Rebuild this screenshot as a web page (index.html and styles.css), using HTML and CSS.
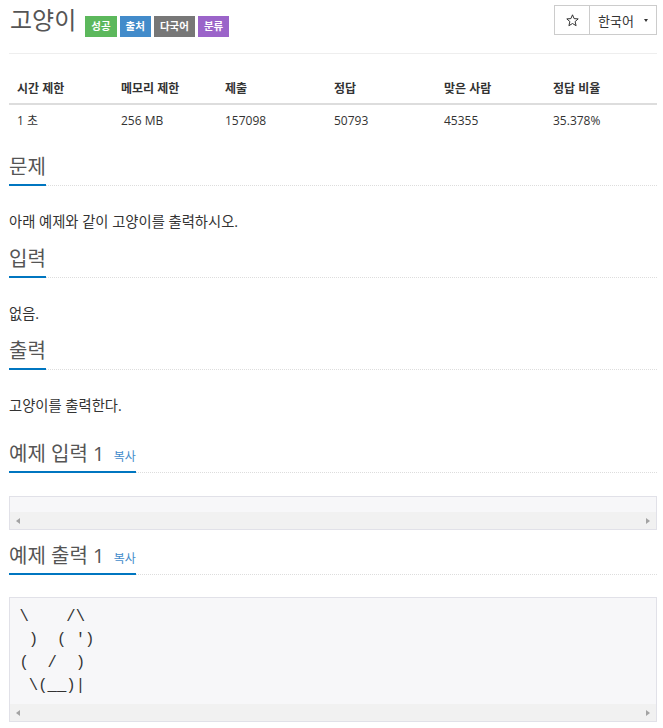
FILE: index.html
```html
<!DOCTYPE html>
<html lang="ko">
<head>
<meta charset="utf-8">
<title>고양이</title>
<link rel="stylesheet" href="styles.css">
</head>
<body>
<div class="page">
  <div class="top">
    <div class="title-row">
      <h1 class="title">고양이</h1>
      <span class="label label-success">성공</span>
      <span class="label label-primary">출처</span>
      <span class="label label-default">다국어</span>
      <span class="label label-purple">분류</span>
    </div>
    <div class="btn-group">
      <button class="btn btn-star" type="button"><svg class="star" width="13" height="13" viewBox="0 0 13 13"><polygon points="6.5,0.8 8.1,4.6 12.2,4.9 9.1,7.6 10.1,11.7 6.5,9.5 2.9,11.7 3.9,7.6 0.8,4.9 4.9,4.6" fill="none" stroke="#333" stroke-width="1" stroke-linejoin="miter"/></svg></button>
      <button class="btn btn-lang" type="button">한국어<span class="caret"></span></button>
    </div>
  </div>

  <table class="stats">
    <colgroup>
      <col class="c1"><col class="c2"><col class="c3"><col class="c4"><col class="c5"><col class="c6">
    </colgroup>
    <thead>
      <tr><th>시간 제한</th><th>메모리 제한</th><th>제출</th><th>정답</th><th>맞은 사람</th><th>정답 비율</th></tr>
    </thead>
    <tbody>
      <tr><td>1 초 </td><td>256 MB</td><td>157098</td><td>50793</td><td>45355</td><td>35.378%</td></tr>
    </tbody>
  </table>

  <section class="sec sec-first">
    <div class="headline"><h2>문제</h2></div>
    <p class="text">아래 예제와 같이 고양이를 출력하시오.</p>
  </section>

  <section class="sec">
    <div class="headline"><h2>입력</h2></div>
    <p class="text">없음.</p>
  </section>

  <section class="sec">
    <div class="headline"><h2>출력</h2></div>
    <p class="text">고양이를 출력한다.</p>
  </section>

  <section class="sec sample sample-in">
    <div class="headline"><h2>예제 입력 1 <a class="copy">복사</a></h2></div>
    <div class="pre">
      <div class="pre-body pre-empty"></div>
      <div class="hscroll"><span class="arr arr-l"></span><span class="arr arr-r"></span></div>
    </div>
  </section>

  <section class="sec sample sample-out">
    <div class="headline"><h2>예제 출력 1 <a class="copy">복사</a></h2></div>
    <div class="pre">
<pre class="pre-body code">\    /\
 )  ( ')
(  /  )
 \(__)|</pre>
      <div class="hscroll"><span class="arr arr-l"></span><span class="arr arr-r"></span></div>
    </div>
  </section>
</div>
</body>
</html>
```

FILE: styles.css
```css
* { box-sizing: border-box; }

body {
  margin: 0;
  background: #fff;
  color: #333;
  font-family: "Open Sans", "Noto Sans CJK KR", sans-serif;
  font-feature-settings: "palt";
  font-size: 14.3px;
}

.page {
  padding: 5px 6px 0 9px;
}

/* header */
.top {
  display: flex;
  justify-content: space-between;
  align-items: flex-start;
  height: 49px;
  border-bottom: 1px solid #eee;
}

.title-row {
  display: flex;
  align-items: flex-start;
  gap: 3px;
}

.title {
  margin: 1px 6px 0 1px;
  font-size: 24px;
  line-height: 28px;
  font-weight: 400;
  color: #555;
}

.label {
  margin-top: 11px;
  height: 21px;
  line-height: 21px;
  padding: 0 6px;
  font-size: 10.5px;
  font-weight: 700;
  color: #fff;
}

.label-success { background: #5cb85c; }
.label-primary { background: #428bca; }
.label-default { background: #777; }
.label-purple { background: #9b64c9; }

.btn-group {
  display: flex;
}

.btn {
  height: 30px;
  border: 1px solid #ccc;
  background: #fff;
  color: #333;
  font-family: inherit;
  font-size: 13px;
  margin: 0;
  padding: 0;
  display: flex;
  align-items: center;
}

.btn-star {
  width: 36px;
  justify-content: center;
}

.star { display: block; }

.btn-lang {
  width: 68px;
  margin-left: -1px;
  padding-left: 8px;
}

.caret {
  margin-left: 10px;
  width: 0;
  height: 0;
  border-top: 3px solid #333;
  border-left: 2.5px solid transparent;
  border-right: 2.5px solid transparent;
}

/* table */
.stats {
  width: 648px;
  margin-top: 18px;
  border-collapse: collapse;
  table-layout: fixed;
  font-size: 12px;
}

.c1 { width: 104px; }
.c2 { width: 104px; }
.c3 { width: 109px; }
.c4 { width: 110px; }
.c5 { width: 109px; }
.c6 { width: 112px; }

.stats th {
  text-align: left;
  font-weight: 700;
  line-height: 18px;
  padding: 8px 8px 5px;
  border-bottom: 2px solid #ddd;
}

.stats td {
  line-height: 18px;
  padding: 7px 8px 5px;
}

/* sections */
.sec { margin-top: 15px; }
.sec-first { margin-top: 20px; }
.sample-in { margin-top: 26px; }
.sample-out { margin-top: 14px; }

.headline {
  display: flex;
  border-bottom: 1px dotted #ddd;
}

.headline h2 {
  margin: 0 0 -1px;
  padding-bottom: 6px;
  border-bottom: 2px solid #0076c0;
  font-size: 20px;
  line-height: 23px;
  font-weight: 400;
  color: #555;
}

.copy {
  margin-left: 4px;
  font-size: 12px;
  line-height: 0;
  color: #428bca;
}

.text {
  margin: 26px 0 0;
  line-height: 20px;
}

/* pre boxes */
.pre {
  border: 1px solid #e1e1e8;
  background: #f7f7f9;
}

.sample-in .pre { margin-top: 23px; }
.sample-out .pre { margin-top: 22px; }

.pre-empty { height: 15px; }

.code {
  margin: 0;
  padding: 8px 9.5px 6px;
  font-family: "Liberation Mono", monospace;
  font-size: 15.6px;
  line-height: 23px;
  color: #333;
  white-space: pre;
}

.hscroll {
  height: 17px;
  background: #f1f1f1;
  display: flex;
  justify-content: space-between;
  align-items: center;
  padding: 0 6px;
}

.arr {
  width: 0;
  height: 0;
  border-top: 3.5px solid transparent;
  border-bottom: 3.5px solid transparent;
}

.arr-l { border-right: 4px solid #a3a3a3; }
.arr-r { border-left: 4px solid #a3a3a3; }
```
